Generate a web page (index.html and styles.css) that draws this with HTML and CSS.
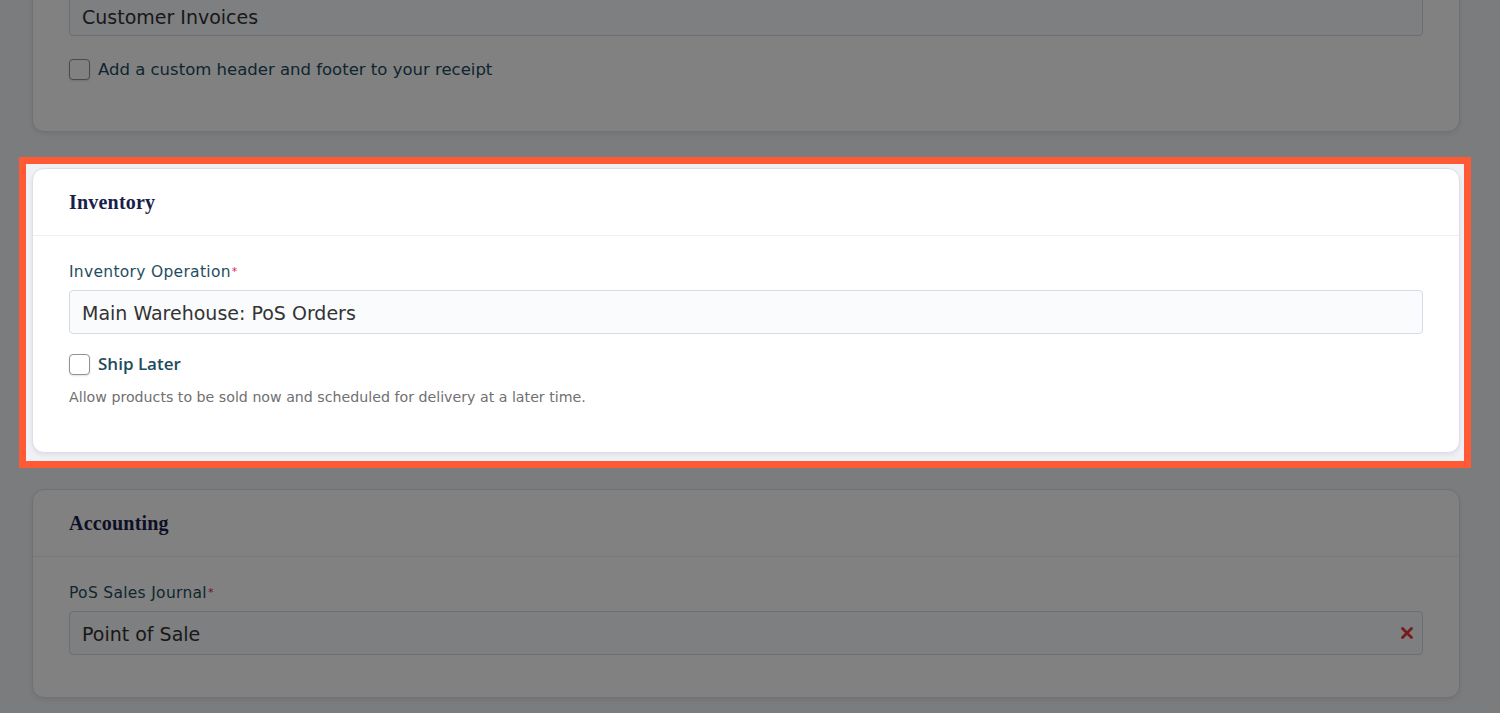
FILE: index.html
```html
<!DOCTYPE html>
<html lang="en">
<head>
<meta charset="utf-8">
<title>PoS Settings</title>
<link rel="stylesheet" href="styles.css">
</head>
<body>
<main class="page">
  <section class="card card-top">
    <div class="input">Customer Invoices</div>
    <label class="check-row check-row-top">
      <span class="checkbox"></span>
      <span class="check-text check-text-normal">Add a custom header and footer to your receipt</span>
    </label>
  </section>

  <div class="spotlight">
    <section class="card">
      <header class="card-head"><h2>Inventory</h2></header>
      <div class="card-body">
        <div class="label">Inventory Operation<span class="req">*</span></div>
        <div class="input">Main Warehouse: PoS Orders</div>
        <label class="check-row">
          <span class="checkbox"></span>
          <span class="check-text">Ship Later</span>
        </label>
        <p class="help">Allow products to be sold now and scheduled for delivery at a later time.</p>
      </div>
    </section>
  </div>

  <section class="card">
    <header class="card-head"><h2>Accounting</h2></header>
    <div class="card-body card-body-acc">
      <div class="label">PoS Sales Journal<span class="req">*</span></div>
      <div class="input input-clear">
        <span>Point of Sale</span>
        <svg class="clear" width="12" height="12" viewBox="0 0 12 12" aria-hidden="true">
          <path d="M1.5 1.5 L10.5 10.5 M10.5 1.5 L1.5 10.5" stroke="#f03434" stroke-width="2.8" stroke-linecap="round" fill="none"/>
        </svg>
      </div>
    </div>
  </section>
</main>
</body>
</html>
```

FILE: styles.css
```css
* { box-sizing: border-box; }

html, body {
  margin: 0;
  height: 100%;
  overflow: hidden;
}

body {
  background: #f4f5f7;
  font-family: "DejaVu Sans", "Open Sans", sans-serif;
  color: #333;
}

.page {
  display: flex;
  flex-direction: column;
  gap: 36px;
  padding: 0 40px 0 32px;
  margin-top: -31px;
}

.card {
  background: #ffffff;
  border: 1px solid #dcdfe8;
  border-radius: 12px;
  box-shadow: 0 2px 4px rgba(20, 25, 60, 0.08);
}

.card-top {
  padding: 22px 36px 52px;
}

.card-top .input {
  padding-top: 5px;
}

.card-head {
  height: 67px;
  display: flex;
  align-items: center;
  padding: 0 36px;
  border-bottom: 1px solid #eef0f3;
}

.card-head h2 {
  margin: 0;
  font-family: "Liberation Serif", "Times New Roman", serif;
  font-weight: 700;
  font-size: 20px;
  color: #1b1e4b;
  letter-spacing: 0.2px;
}

.card-body {
  padding: 26px 36px 42px;
}

.label {
  font-size: 15.5px;
  line-height: 20px;
  color: #1f4e60;
  margin-bottom: 8px;
  letter-spacing: 0.3px;
}

.req {
  color: #e0204a;
  font-size: 11px;
  vertical-align: top;
  margin-left: 1px;
}

.input {
  height: 44px;
  border: 1px solid #d6d9e6;
  border-radius: 4px;
  background: #fafbfd;
  display: flex;
  align-items: center;
  padding: 2px 12px 0;
  font-size: 19px;
  color: #333;
}

.input-clear {
  justify-content: space-between;
  padding-right: 9px;
}

.clear { display: block; margin-top: -2px; }

.check-row {
  display: flex;
  align-items: center;
  gap: 8px;
  height: 20px;
  margin-top: 20px;
}

.check-row-top { margin-top: 23px; }

.checkbox {
  width: 21px;
  height: 21px;
  border: 1.5px solid #8f9296;
  border-radius: 4px;
  background: #fff;
  box-shadow: 0 1px 2px rgba(0, 0, 0, 0.12);
  flex: none;
}

.check-text {
  font-family: "Open Sans", "DejaVu Sans", sans-serif;
  font-size: 17px;
  font-weight: 600;
  color: #1d4b5c;
  margin-top: -2px;
}

.check-text-normal {
  font-family: "DejaVu Sans", "Open Sans", sans-serif;
  font-size: 16.5px;
  font-weight: 400;
  margin-top: 0;
}

.help {
  margin: 14px 0 4px;
  font-size: 14.2px;
  line-height: 18px;
  color: #707070;
}

.spotlight {
  position: relative;
  z-index: 1;
  margin: -11px -11px -15px -13px;
  padding: 4px 4px 8px 6px;
  border: 7px solid #ff5a33;
  background: #f0f1f5;
  box-shadow: 0 0 0 3000px rgba(0, 0, 0, 0.495);
}
```
